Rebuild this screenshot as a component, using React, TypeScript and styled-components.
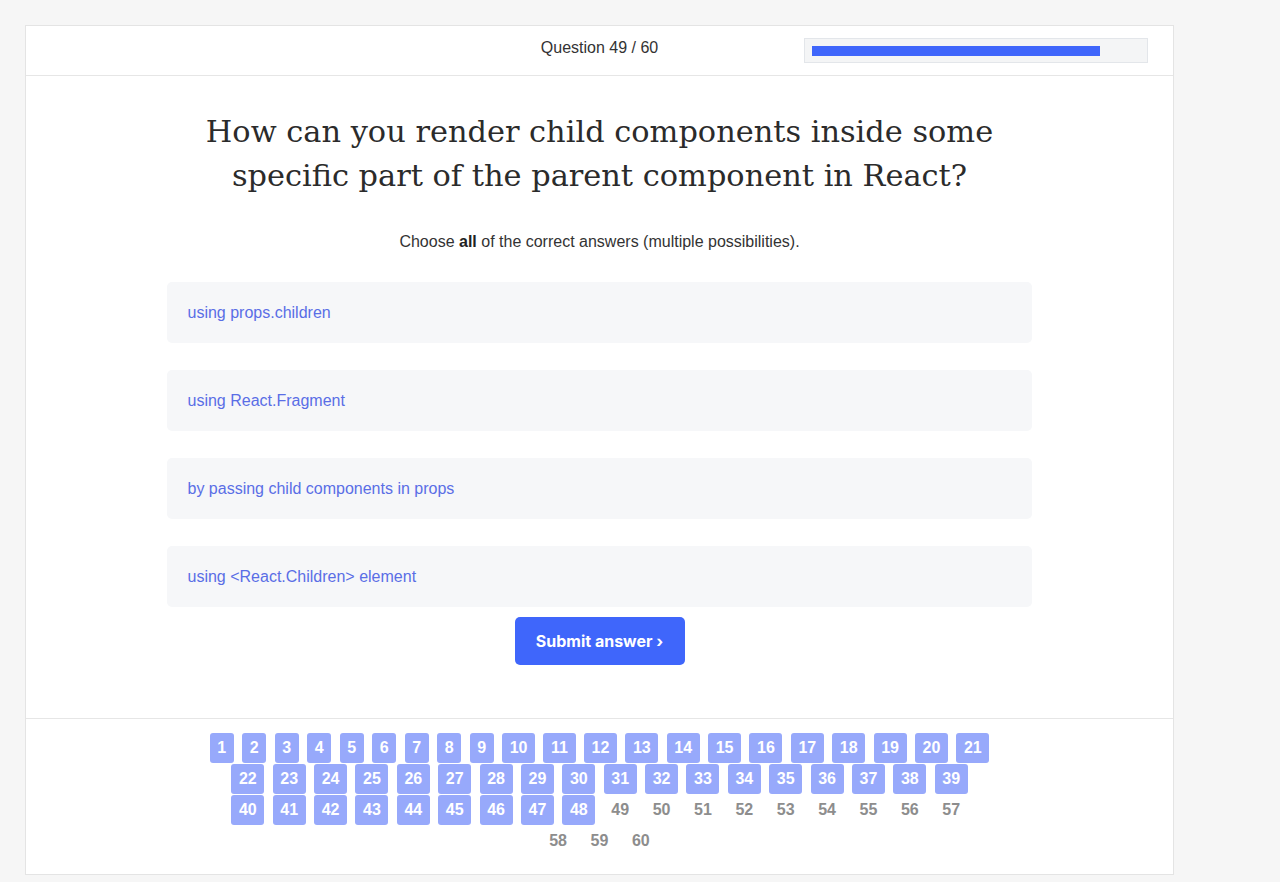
import React from "react";
import styled, { createGlobalStyle } from "styled-components";

const Global = createGlobalStyle`
  html, body { margin: 0; padding: 0; }
  body {
    background: #f6f6f6;
    font-family: "Liberation Sans", Arial, sans-serif;
    color: #333;
  }
`;

const Page = styled.div`
  padding: 25px 0 8px 25px;
`;

const Card = styled.div`
  box-sizing: border-box;
  width: 1149px;
  background: #fff;
  border: 1px solid #e4e4e4;
  display: flex;
  flex-direction: column;
`;

const Header = styled.div`
  height: 49px;
  border-bottom: 1px solid #e6e6e6;
  display: grid;
  grid-template-columns: 1fr 1fr 1fr;
  align-items: center;
`;

const Counter = styled.div`
  grid-column: 2;
  text-align: center;
  font-size: 16px;
  color: #333;
  margin-top: -6px;
`;

const Progress = styled.div`
  grid-column: 3;
  justify-self: end;
  margin-right: 25px;
  box-sizing: border-box;
  width: 344px;
  height: 25px;
  padding: 7px;
  border: 1px solid #e3e6ea;
  background: #f4f5f6;
  display: flex;
  align-items: flex-start;
`;

const Fill = styled.div`
  height: 10px;
  background: #3f66fb;
`;

const Body = styled.div`
  display: flex;
  flex-direction: column;
  align-items: center;
  padding: 34px 0 53px;
`;

const Title = styled.h1`
  margin: 0;
  width: 820px;
  text-align: center;
  font-family: "DejaVu Serif", Georgia, serif;
  font-weight: normal;
  font-size: 30.4px;
  line-height: 44px;
  color: #2b2b2b;
`;

const Hint = styled.p`
  margin: 35px 0 31px;
  font-size: 16px;
  line-height: 18px;
  color: #333;
  b { font-weight: bold; color: #222; }
`;

const Options = styled.div`
  display: flex;
  flex-direction: column;
  gap: 27px;
  width: 865px;
  margin-left: -1px;
`;

const Option = styled.div`
  box-sizing: border-box;
  height: 61px;
  padding: 0 21px;
  border-radius: 5px;
  background: #f6f7f9;
  display: flex;
  align-items: center;
  font-size: 16px;
  color: #5a6ee6;
`;

const Submit = styled.button`
  margin-top: 10px;
  width: 170px;
  height: 48px;
  border: none;
  border-radius: 5px;
  background: #3f66fb;
  color: #fff;
  font-family: Inter, "Liberation Sans", sans-serif;
  font-weight: 700;
  font-size: 16px;
  cursor: pointer;
`;

const Footer = styled.div`
  border-top: 1px solid #e6e6e6;
  padding: 14px 0 18px;
  display: flex;
  flex-direction: column;
  align-items: center;
  gap: 1px;
`;

const NavRow = styled.div`
  display: flex;
  justify-content: center;
  gap: 8.4px;
`;

const NavItem = styled.span<{ $done: boolean }>`
  box-sizing: border-box;
  height: 30px;
  line-height: 30px;
  padding: 0 7.6px;
  border-radius: 3px;
  font-size: 16px;
  font-weight: bold;
  text-align: center;
  background: ${(p) => (p.$done ? "#97a9fb" : "transparent")};
  color: ${(p) => (p.$done ? "#fff" : "#8d8d8d")};
`;

const options = [
  "using props.children",
  "using React.Fragment",
  "by passing child components in props",
  "using <React.Children> element",
];

const range = (a: number, b: number) =>
  Array.from({ length: b - a + 1 }, (_, i) => a + i);

const rows = [range(1, 21), range(22, 39), range(40, 57), range(58, 60)];

const current = 49;
const total = 60;

export default function App() {
  return (
    <>
      <Global />
      <Page>
        <Card>
          <Header>
            <Counter>
              Question {current} / {total}
            </Counter>
            <Progress>
              <Fill style={{ width: "87.8%" }} />
            </Progress>
          </Header>
          <Body>
            <Title>
              How can you render child components inside some specific part of
              the parent component in React?
            </Title>
            <Hint>
              Choose <b>all</b> of the correct answers (multiple possibilities).
            </Hint>
            <Options>
              {options.map((o) => (
                <Option key={o}>{o}</Option>
              ))}
            </Options>
            <Submit>Submit answer ›</Submit>
          </Body>
          <Footer>
            {rows.map((r, i) => (
              <NavRow key={i}>
                {r.map((n) => (
                  <NavItem key={n} $done={n < current}>
                    {n}
                  </NavItem>
                ))}
              </NavRow>
            ))}
          </Footer>
        </Card>
      </Page>
    </>
  );
}
